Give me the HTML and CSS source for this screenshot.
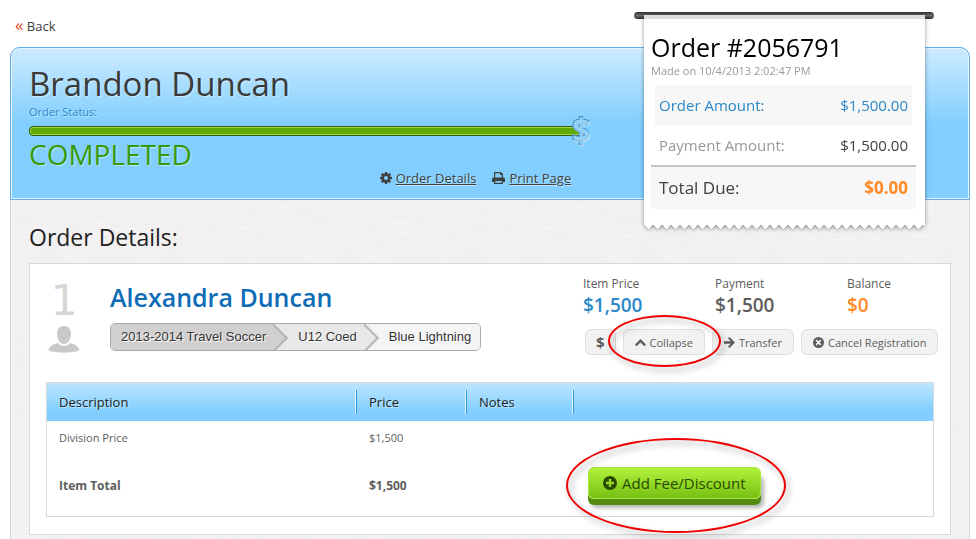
FILE: index.html
```html
<!DOCTYPE html>
<html lang="en">
<head>
    <meta charset="UTF-8">
    <meta name="viewport" content="width=device-width, initial-scale=1.0">
    <title>Order #2056791</title>
    <link rel="stylesheet" href="styles.css">
</head>
<body>
    <nav class="back-nav">
        <a href="#" class="back-link"><span class="back-arrow">«</span> Back</a>
    </nav>

    <main class="order">
        <header class="order-header">
            <div class="order-status">
                <h1>Brandon Duncan</h1>
                <div class="status-label">Order Status:</div>
                <div class="status-bar">
                    <svg class="status-dollar" viewBox="0 0 24 44" width="24" height="44">
                        <text x="12" y="33">$</text>
                    </svg>
                </div>
                <div class="status-value">COMPLETED</div>
                <div class="order-links">
                    <a href="#">
                        <svg class="icon" viewBox="0 0 12 12" width="12" height="12">
                            <path fill-rule="evenodd" d="M5 0h2l.3 1.6.8.3L9.500 1 11 2.500l-.9 1.400.3.8L12 5v2l-1.600.3-.3.8.9 1.400L9.500 11l-1.400-.9-.8.3L7 12H5l-.3-1.600-.8-.3L2.500 11 1 9.500l.9-1.400-.3-.8L0 7V5l1.600-.3.3-.8L1 2.500 2.500 1l1.400.9.8-.3zM6 4a2 2 0 100 4 2 2 0 000-4z"/>
                        </svg>
                        <span>Order Details</span>
                    </a>
                    <a href="#">
                        <svg class="icon" viewBox="0 0 13 12" width="13" height="12">
                            <path fill-rule="evenodd" d="M2 0h7l2 2v3.500h.5A1.500 1.500 0 0113 7v3h-2v2H2v-2H0V7a1.500 1.500 0 011.500-1.500H2zM3.200 1.200v4.300h6.600V3H8V1.200zM3.200 9v1.800h6.600V9z"/>
                        </svg>
                        <span>Print Page</span>
                    </a>
                </div>
            </div>
        </header>

        <aside class="receipt-holder">
            <div class="receipt">
                <h2>Order #2056791</h2>
                <div class="made-on">Made on 10/4/2013 2:02:47 PM</div>
                <dl class="amounts">
                    <div class="amount order-amount"><dt>Order Amount:</dt><dd>$1,500.00</dd></div>
                    <div class="amount payment-amount"><dt>Payment Amount:</dt><dd>$1,500.00</dd></div>
                    <div class="amount total-due"><dt>Total Due:</dt><dd>$0.00</dd></div>
                </dl>
            </div>
        </aside>

        <section class="details">
            <h2>Order Details:</h2>

            <article class="card">
                <div class="card-top">
                    <div class="person-number">
                        <span class="number">1</span>
                        <svg viewBox="0 0 32 27" width="32" height="27">
                            <path fill="#c9c9c9" d="M16 0c5 0 7 3.500 7 8 0 5-3 10-7 10S9 13 9 8c0-4.500 2-8 7-8zM10 17c1.500 2 3.500 3 6 3s4.500-1 6-3c5 1.500 9 3.500 9.500 7.500C27 26 22 26.500 16 26.500S5 26 .5 24.500C1 20.500 5 18.500 10 17z"/>
                        </svg>
                    </div>

                    <div class="person">
                        <h3>Alexandra Duncan</h3>
                        <ol class="crumbs">
                            <li>2013-2014 Travel Soccer</li>
                            <li>U12 Coed</li>
                            <li>Blue Lightning</li>
                        </ol>
                    </div>

                    <div class="summary">
                        <dl class="prices">
                            <div><dt>Item Price</dt><dd class="blue">$1,500</dd></div>
                            <div><dt>Payment</dt><dd>$1,500</dd></div>
                            <div><dt>Balance</dt><dd class="orange">$0</dd></div>
                        </dl>
                        <div class="actions">
                            <button type="button" class="btn btn-dollar">$</button>
                            <div class="marked marked-small">
                                <button type="button" class="btn">
                                    <svg class="icon" viewBox="0 0 11 11" width="11" height="11">
                                        <path d="M5.500 2L11 7.500 9.300 9.200 5.500 5.400 1.700 9.200 0 7.500z"/>
                                    </svg>
                                    Collapse
                                </button>
                            </div>
                            <button type="button" class="btn">
                                <svg class="icon" viewBox="0 0 11 11" width="11" height="11">
                                    <path d="M5.500 0L11 5.500 5.500 11 4 9.500l2.800-2.800H0V4.300h6.800L4 1.500z"/>
                                </svg>
                                Transfer
                            </button>
                            <button type="button" class="btn">
                                <svg class="icon" viewBox="0 0 11 11" width="11" height="11">
                                    <path fill-rule="evenodd" d="M5.500 0a5.500 5.500 0 110 11 5.500 5.500 0 010-11zM3.800 2.600L2.600 3.800l1.700 1.700-1.700 1.700 1.200 1.200 1.700-1.700 1.700 1.700 1.200-1.200-1.700-1.700 1.700-1.700-1.200-1.200-1.700 1.700z"/>
                                </svg>
                                Cancel Registration
                            </button>
                        </div>
                    </div>
                </div>

                <table class="items">
                    <colgroup>
                        <col class="col-description">
                        <col class="col-price">
                        <col class="col-notes">
                        <col>
                    </colgroup>
                    <thead>
                        <tr>
                            <th scope="col">Description</th>
                            <th scope="col">Price</th>
                            <th scope="col">Notes</th>
                            <td></td>
                        </tr>
                    </thead>
                    <tbody>
                        <tr>
                            <td>Division Price</td>
                            <td>$1,500</td>
                            <td></td>
                            <td></td>
                        </tr>
                        <tr class="total">
                            <th scope="row">Item Total</th>
                            <td>$1,500</td>
                            <td></td>
                            <td>
                                <div class="marked marked-large">
                                    <button type="button" class="btn-add">
                                        <svg class="icon" viewBox="0 0 14 14" width="14" height="14">
                                            <path fill-rule="evenodd" d="M7 0a7 7 0 110 14A7 7 0 017 0zM5.800 3v2.800H3v2.400h2.800V11h2.400V8.200H11V5.800H8.200V3z"/>
                                        </svg>
                                        Add Fee/Discount
                                    </button>
                                </div>
                            </td>
                        </tr>
                    </tbody>
                </table>
            </article>
        </section>
    </main>
</body>
</html>
```

FILE: styles.css
```css
* {
    box-sizing: border-box;
}

body {
    display: flex;
    flex-direction: column;
    min-height: 100vh;
    margin: 0;
    padding: 15px 6px 0 10px;
    background: #fff;
    color: #404040;
    font-family: "Open Sans", "Noto Sans", sans-serif;
    font-size: 12px;
    line-height: 16px;
}

h1, h2, h3, dl, dd, ol {
    margin: 0;
    padding: 0;
    font-weight: 400;
}

button {
    font-family: inherit;
    cursor: pointer;
}

.icon {
    flex: none;
    fill: currentColor;
}

/* Back link */
.back-nav {
    height: 32px;
    padding-left: 5px;
}

.back-link {
    color: #404040;
    font-size: 13px;
    line-height: 20px;
    text-decoration: none;
}

.back-arrow {
    color: #d0451b;
    font-size: 17px;
}

/* Main panel, on a faint paper texture */
.order {
    position: relative;
    flex: 1;
    border: 1px solid #d6d6d6;
    border-top: 0;
    border-bottom: 0;
    border-radius: 10px 10px 0 0;
    background: #f4f2f2 url("data:image/svg+xml,%3Csvg xmlns='http://www.w3.org/2000/svg' width='300' height='300'%3E%3Cfilter id='p'%3E%3CfeTurbulence type='fractalNoise' baseFrequency='.04 .25' numOctaves='3' stitchTiles='stitch'/%3E%3CfeColorMatrix values='0 0 0 0 .5 0 0 0 0 .5 0 0 0 0 .5 .12 0 0 0 -.03'/%3E%3C/filter%3E%3Crect width='300' height='300' filter='url(%23p)'/%3E%3C/svg%3E");
}

.order-header {
    margin: 0 -1px;
    padding: 16px 18px 11px;
    border: 1px solid #64aee8;
    border-radius: 10px 10px 0 0;
    background: linear-gradient(#cdebff, #82cfff 50%);
    box-shadow: inset 0 0 0 1px #e3f4ff;
    text-shadow: 1px 1px 1px rgba(255, 255, 255, 0.5);
}

.order-status {
    width: 60%;
}

.order-status h1 {
    color: #3a3a3a;
    font-size: 33px;
    line-height: 40px;
}

.status-label {
    color: #2c88c8;
    font-size: 11px;
}

.status-bar {
    position: relative;
    height: 10px;
    margin: 6px 0 4px;
    border: 1px solid #2f6400;
    border-radius: 4px;
    background: #63aa00;
    box-shadow: inset 0 0 0 1px #9fd052;
}

.status-dollar {
    position: absolute;
    top: -18px;
    right: -12px;
    overflow: visible;
    fill: #93d2f8;
    stroke: #4389bb;
    stroke-width: 2px;
    paint-order: stroke;
    font-size: 32px;
    font-weight: 600;
    text-anchor: middle;
}

.status-value {
    color: #359a0a;
    font-size: 28px;
    line-height: 28px;
}

.order-links {
    display: flex;
    justify-content: flex-end;
    gap: 16px;
    padding-right: 11px;
}

.order-links a {
    display: flex;
    align-items: center;
    gap: 4px;
    color: #404040;
    font-size: 13px;
    line-height: 20px;
    text-decoration: none;
}

.order-links span {
    text-decoration: underline;
}

/* Receipt hanging over the header */
.receipt-holder {
    position: absolute;
    top: -35px;
    right: 35px;
    width: 300px;
    padding: 3px 9px 0 10px;
}

.receipt-holder::before {
    content: '';
    position: absolute;
    top: 0;
    left: 0;
    right: 0;
    height: 7px;
    border-radius: 4px;
    background: linear-gradient(#2f2f2f, #6a6a6a 50%, #2c2c2c);
}

.receipt {
    position: relative;
    padding: 14px 9px 16px 7px;
    background: linear-gradient(#e0dde0 4px, #fff 4px);
    filter: drop-shadow(0 1px 2px rgba(0, 0, 0, 0.4));
}

/* Torn paper edge */
.receipt::after {
    content: '';
    position: absolute;
    top: 100%;
    left: 0;
    right: 0;
    height: 4px;
    background: conic-gradient(from -48deg at 50% 100%, #fff 96deg, transparent 0) 0 0 / 9px 4px;
}

.receipt h2 {
    color: #000;
    font-size: 25px;
    line-height: 36px;
}

.made-on {
    color: #999;
    font-size: 11px;
    line-height: 12px;
}

.amounts {
    margin-top: 8px;
}

.amount {
    display: flex;
    justify-content: space-between;
    margin: 0 4px;
    padding: 0 4px;
    font-size: 15px;
    line-height: 40px;
}

.order-amount {
    background: #f7f7f7;
    color: #2c88c8;
}

.payment-amount dt {
    color: #999;
}

.total-due {
    margin: 0;
    padding: 0 8px;
    border-top: 2px solid #c4c4c4;
    background: #f7f7f7;
    font-size: 17px;
    line-height: 42px;
}

.total-due dd {
    color: #ff8a26;
    font-weight: 700;
}

/* Order details */
.details {
    padding: 20px 18px 0;
}

.details > h2 {
    color: #222;
    font-size: 23px;
    line-height: 34px;
}

.card {
    margin-top: 9px;
    padding: 12px 16px 17px;
    border: 1px solid #d9d9d9;
    background: #fff;
}

.card-top {
    display: flex;
    height: 106px;
}

.person-number {
    display: flex;
    flex-direction: column;
    align-items: center;
    width: 36px;
    margin-right: 28px;
}

.number {
    color: #d6d6d6;
    font-family: "DejaVu Sans", sans-serif;
    font-size: 42px;
    line-height: 50px;
}

.person {
    flex: 1;
}

.person h3 {
    color: #0f6cb6;
    font-size: 25px;
    font-weight: 600;
    line-height: 42px;
}

/* Breadcrumb arrows */
.crumbs {
    display: inline-flex;
    margin-top: 5px;
    overflow: hidden;
    border: 1px solid #aaa;
    border-radius: 5px;
    background: #f4f4f4;
    color: #333;
    font-family: "Liberation Sans", Arial, sans-serif;
    font-size: 13px;
    line-height: 26px;
    list-style: none;
    text-shadow: 1px 1px 0 #fff;
}

.crumbs li {
    position: relative;
    padding: 0 9px 0 23px;
    background: #f4f4f4;
}

.crumbs li:nth-child(1) {
    z-index: 2;
    padding-left: 10px;
    background: #d1cfd0;
}

.crumbs li:nth-child(2) {
    z-index: 1;
    background: #e8e8e8;
}

.crumbs li:not(:last-child)::after {
    content: '';
    position: absolute;
    top: 4px;
    right: -9px;
    width: 18px;
    height: 18px;
    border: solid #b5b5b5;
    border-width: 2px 2px 0 0;
    background: inherit;
    transform: rotate(45deg);
    z-index: -1;
}

/* Prices and actions */
.summary {
    width: 351px;
}

.prices {
    display: grid;
    grid-template-columns: 132px 132px 1fr;
    color: #5d5d5d;
}

.prices dd {
    font-size: 19px;
    font-weight: 600;
    line-height: 26px;
}

.prices .blue {
    color: #2c88c8;
}

.prices .orange {
    color: #ff8a26;
}

.actions {
    display: flex;
    gap: 7px;
    margin: 11px 0 0 2px;
}

.btn {
    display: flex;
    align-items: center;
    gap: 4px;
    height: 26px;
    padding: 0 11px;
    border: 1px solid #dedede;
    border-radius: 6px;
    background: #f2f2f2;
    color: #5d5d5d;
    font-size: 11px;
    font-weight: 500;
    white-space: nowrap;
}

.btn-dollar {
    padding: 0 10px;
    font-size: 15px;
    font-weight: 700;
}

/* Red highlight rings */
.marked {
    position: relative;
}

.marked::after {
    content: '';
    position: absolute;
    border: 2px solid #f00000;
    border-radius: 50%;
    filter: drop-shadow(3px 4px 3px rgba(0, 0, 0, 0.35));
    pointer-events: none;
    z-index: 1;
}

.marked-small::after {
    inset: -14px -16px -12px -15px;
}

.marked-large::after {
    inset: -29px -25px -28px -22px;
}

/* Items table */
.items {
    width: 100%;
    border: 1px solid #d9d9d9;
    border-spacing: 0;
    table-layout: fixed;
    color: #5d5d5d;
}

.col-description {
    width: 310px;
}

.col-price {
    width: 110px;
}

.col-notes {
    width: 107px;
}

.items th,
.items td {
    padding: 0 12px;
    text-align: left;
}

.items td:last-child {
    padding-left: 14px;
}

.items thead {
    background: linear-gradient(#bce5ff, #82cfff 75%);
}

.items thead th {
    height: 38px;
    background: linear-gradient(90deg, #e3f4ff 1px, #2c98e0 1px) right / 2px 24px no-repeat;
    color: #222;
    font-size: 13px;
    font-weight: 400;
    text-shadow: 1px 1px 1px rgba(255, 255, 255, 0.5);
}

.items tbody td {
    height: 34px;
    font-size: 11px;
}

.items .total th,
.items .total td {
    height: 61px;
    font-size: 12px;
    font-weight: 700;
}

.marked-large {
    display: inline-block;
    vertical-align: middle;
}

.btn-add {
    display: flex;
    align-items: center;
    gap: 5px;
    height: 32px;
    margin-bottom: 6px;
    padding: 0 14px;
    border: 1px solid #a5e83a;
    border-radius: 6px;
    background: linear-gradient(#b2f23c, #76c012);
    box-shadow: 0 6px 0 #548c10, 3px 9px 4px rgba(0, 0, 0, 0.3);
    color: #2a4a00;
    font-size: 15px;
}
```
